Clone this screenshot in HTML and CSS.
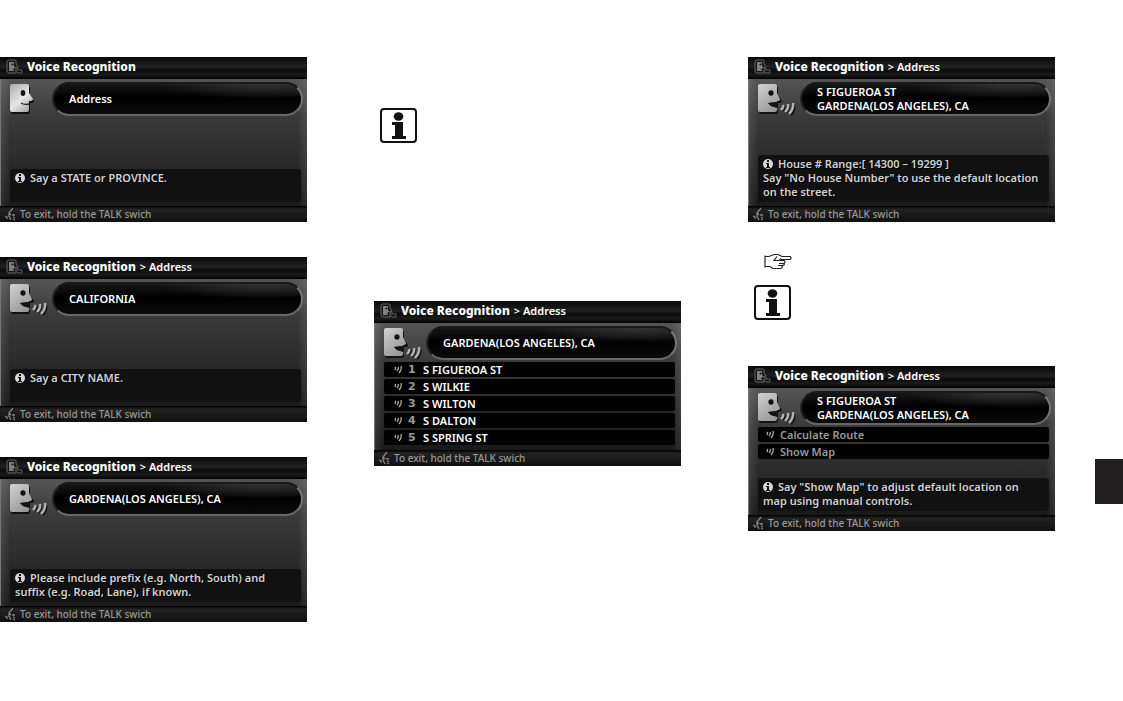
FILE: index.html
```html
<!DOCTYPE html>
<html lang="en">
<head>
<meta charset="utf-8">
<title>Voice Recognition: Address</title>
<link rel="stylesheet" href="styles.css">
</head>
<body>
<svg class="sprites" aria-hidden="true">
  <defs>
    <linearGradient id="skin" x1="0" y1="0" x2="0.6" y2="1"><stop offset="0" stop-color="#d2d2d2"/><stop offset="1" stop-color="#999"/></linearGradient>
    <linearGradient id="skin-lit" x1="0" y1="0" x2="0.7" y2="1"><stop offset="0" stop-color="#aaa"/><stop offset="0.6" stop-color="#e6e6e6"/><stop offset="1" stop-color="#aaa"/></linearGradient>
    <symbol id="face-closed" viewBox="0 0 40 34">
      <path d="M3 3H18Q20 3 20 5V12L24 18Q24 20 20 20V29Q20 31 18 31H3Q1 31 1 29V5Q1 3 3 3Z" fill="#111" transform="translate(1 1)"/>
      <path d="M3 2H18Q20 2 20 4V11L24 17Q24 19 20 19V28Q20 30 18 30H3Q1 30 1 28V4Q1 2 3 2Z" fill="url(#skin-lit)"/>
      <ellipse cx="14" cy="11" rx="2.300" ry="3" fill="#111"/><path d="M12 21Q15 23 20 22" fill="none" stroke="#222" stroke-width="1.300"/>
    </symbol>
    <symbol id="face-talk" viewBox="0 0 40 34">
      <path d="M3 3H18Q20 3 20 5V12L24 18Q24 20 20 20L13 22L20 27V29Q20 31 18 31H3Q1 31 1 29V5Q1 3 3 3Z" fill="#111" transform="translate(1 1)"/>
      <path d="M3 2H18Q20 2 20 4V11L23 17Q23 19 20 19V20L11 21L14 24L20 26V28Q20 30 18 30H3Q1 30 1 28V4Q1 2 3 2Z" fill="url(#skin)"/>
      <path d="M11 21L21 20V26L14 24Z" fill="#151515"/>
      <ellipse cx="14" cy="11" rx="2.600" ry="2.800" fill="#111"/>
      <g fill="none" stroke="#151515" stroke-width="2.600" transform="translate(1 1)"><path d="M26 23Q27 25 25 28M31 22Q31 26 28 30M36 22Q37 27 33 32"/></g>
      <g fill="none" stroke="#b4b4b4" stroke-width="2.400"><path d="M26 23Q27 25 24 28M31 22Q32 26 28 30M36 21Q37 27 32 32"/></g>
    </symbol>
    <symbol id="head" viewBox="0 0 17 16">
      <path d="M3 1H9Q10 1 10 2V5L12 8L10 9V14H3Q1 14 1 12V3Q1 1 3 1Z" fill="#151515" stroke="#666"/>
      <path d="M3 3H8V7L10 9H8V10H6L8 11V12H3Z" fill="#808080"/><circle cx="6.500" cy="5.500" r="1" fill="#111"/>
      <path d="M11 11H16V14H12L10 12M12 9V11" fill="none" stroke="#606060"/>
    </symbol>
    <symbol id="talk" viewBox="0 0 12 14">
      <path d="M9 1L5 6L7 8M5 6V9L7 13M1 9L3 10V12M8 8L11 8M9 10L11 11M9 12L11 13" fill="none" stroke="#858585" stroke-width="1.300"/>
    </symbol>
    <symbol id="info" viewBox="0 0 10 10"><circle cx="5" cy="5" r="5" fill="#d8d8d8"/><path d="M4 1H6V3H4ZM3 4H6V8H7V9H3V8H4V5H3Z" fill="#111"/></symbol>
    <symbol id="waves" viewBox="0 0 9 8"><path d="M1 1Q2 2 1 4M4 1Q5 3 3 5M7 0Q8 4 5 7" fill="none" stroke="#aaa" stroke-width="1.300"/></symbol>
    <symbol id="notice" viewBox="0 0 37 35">
      <rect x="1" y="1" width="35" height="33" rx="3" fill="#fff" stroke="#111" stroke-width="2"/>
      <ellipse cx="18.500" cy="8.500" rx="4.800" ry="4.200" fill="#111"/><path d="M12 14H23V28H26V31H12V28H15V17H12Z" fill="#111"/>
    </symbol>
  </defs>
</svg>
<div class="page">
  <main class="columns">
    <div class="column">
      <section class="screen">
        <h2 class="title"><svg class="title-icon"><use href="#head"/></svg><b>Voice Recognition</b></h2>
        <div class="body">
          <div class="heard"><svg class="face"><use href="#face-closed"/></svg><p class="pill">Address</p></div>
          <p class="hint"><svg class="info"><use href="#info"/></svg>Say a STATE or PROVINCE.</p>
        </div>
        <p class="footer"><svg class="talk"><use href="#talk"/></svg>To exit, hold the TALK swich</p>
      </section>
      <section class="screen">
        <h2 class="title"><svg class="title-icon"><use href="#head"/></svg><b>Voice Recognition</b> &gt; Address</h2>
        <div class="body">
          <div class="heard"><svg class="face"><use href="#face-talk"/></svg><p class="pill">CALIFORNIA</p></div>
          <p class="hint"><svg class="info"><use href="#info"/></svg>Say a CITY NAME.</p>
        </div>
        <p class="footer"><svg class="talk"><use href="#talk"/></svg>To exit, hold the TALK swich</p>
      </section>
      <section class="screen">
        <h2 class="title"><svg class="title-icon"><use href="#head"/></svg><b>Voice Recognition</b> &gt; Address</h2>
        <div class="body">
          <div class="heard"><svg class="face"><use href="#face-talk"/></svg><p class="pill">GARDENA(LOS ANGELES), CA</p></div>
          <p class="hint"><svg class="info"><use href="#info"/></svg>Please include prefix (e.g. North, South) and<br>suffix (e.g. Road, Lane), if known.</p>
        </div>
        <p class="footer"><svg class="talk"><use href="#talk"/></svg>To exit, hold the TALK swich</p>
      </section>
    </div>
    <div class="column middle">
      <svg class="notice" role="img" aria-label="Information"><use href="#notice"/></svg>
      <section class="screen">
        <h2 class="title"><svg class="title-icon"><use href="#head"/></svg><b>Voice Recognition</b> &gt; Address</h2>
        <div class="body">
          <div class="heard"><svg class="face"><use href="#face-talk"/></svg><p class="pill">GARDENA(LOS ANGELES), CA</p></div>
          <ol class="choices">
            <li><svg class="waves"><use href="#waves"/></svg><span class="number">1</span>S FIGUEROA ST</li>
            <li><svg class="waves"><use href="#waves"/></svg><span class="number">2</span>S WILKIE</li>
            <li><svg class="waves"><use href="#waves"/></svg><span class="number">3</span>S WILTON</li>
            <li><svg class="waves"><use href="#waves"/></svg><span class="number">4</span>S DALTON</li>
            <li><svg class="waves"><use href="#waves"/></svg><span class="number">5</span>S SPRING ST</li>
          </ol>
        </div>
        <p class="footer"><svg class="talk"><use href="#talk"/></svg>To exit, hold the TALK swich</p>
      </section>
    </div>
    <div class="column last">
      <section class="screen">
        <h2 class="title"><svg class="title-icon"><use href="#head"/></svg><b>Voice Recognition</b> &gt; Address</h2>
        <div class="body">
          <div class="heard"><svg class="face"><use href="#face-talk"/></svg><p class="pill">S FIGUEROA ST<br>GARDENA(LOS ANGELES), CA</p></div>
          <p class="hint"><svg class="info"><use href="#info"/></svg>House # Range:[ 14300 – 19299 ]<br>Say "No House Number" to use the default location<br>on the street.</p>
        </div>
        <p class="footer"><svg class="talk"><use href="#talk"/></svg>To exit, hold the TALK swich</p>
      </section>
      <div class="notes">
        <svg class="hand" viewBox="0 0 28 16" role="img" aria-label="See"><path d="M1 2V14M1 3H5L10 1H14L18 3H26Q28 5 26 6H17M13 3L10 7L15 7L17 5M16 7H20Q22 8 20 10H15M20 10Q21 12 18 12H14M18 12Q19 15 16 15H9L6 13H1" fill="none" stroke="#222" stroke-width="1.200"/></svg>
        <svg class="notice" role="img" aria-label="Information"><use href="#notice"/></svg>
      </div>
      <section class="screen">
        <h2 class="title"><svg class="title-icon"><use href="#head"/></svg><b>Voice Recognition</b> &gt; Address</h2>
        <div class="body">
          <div class="heard"><svg class="face"><use href="#face-talk"/></svg><p class="pill">S FIGUEROA ST<br>GARDENA(LOS ANGELES), CA</p></div>
          <ul class="choices dim">
            <li><svg class="waves"><use href="#waves"/></svg>Calculate Route</li>
            <li><svg class="waves"><use href="#waves"/></svg>Show Map</li>
          </ul>
          <p class="hint"><svg class="info"><use href="#info"/></svg>Say "Show Map" to adjust default location on<br>map using manual controls.</p>
        </div>
        <p class="footer"><svg class="talk"><use href="#talk"/></svg>To exit, hold the TALK swich</p>
      </section>
    </div>
  </main>
  <div class="thumb-tab"></div>
</div>
</body>
</html>
```
FILE: styles.css
```css
* { box-sizing: border-box; }
body, p, h2, ol, ul { margin: 0; padding: 0; }
body { background: #fff; font: 600 11px/14px "Noto Sans", sans-serif; color: #fff; }
svg { flex: none; }
.sprites { position: absolute; width: 0; height: 0; }

.page { display: flex; gap: 40px; }
.columns { flex: 1; display: grid; grid-template-columns: repeat(3, 1fr); gap: 67px; padding-top: 57px; }
.column { display: flex; flex-direction: column; gap: 35px; }
.middle { gap: 158px; padding-top: 51px; }
.last { gap: 0; }
.notes { display: flex; flex-direction: column; gap: 15px; padding: 31px 0 46px 6px; }
.notice { display: block; width: 37px; height: 35px; }
.middle .notice { margin-left: 6px; }
.hand { display: block; width: 28px; height: 17px; margin-left: 10px; }
.thumb-tab { width: 28px; height: 45px; margin-top: 459px; background: #231f20; }

.screen { display: flex; flex-direction: column; min-height: 165px; white-space: nowrap; background: #1c1c1c; }
.title { display: flex; align-items: center; gap: 4px; height: 22px; padding: 0 0 2px 6px; font-size: 11px; font-weight: 600; background: linear-gradient(#080808, #202020 45%, #0a0a0a 60%, #1b1b1b 80%, #000); }
.title b { font-size: 12px; font-weight: 800; }
.title-icon { width: 17px; height: 16px; }
.body { flex: 1; display: flex; flex-direction: column; gap: 2px; padding: 3px 4px 4px 8px; border-left: 1px solid #777; background: linear-gradient(90deg, #ffffff18, transparent 3%, transparent 97%, #ffffff18), linear-gradient(#555, #3a3a3a 30%, #262626 75%, #191919); }
.heard { display: flex; gap: 3px; }
.face { width: 40px; height: 34px; }
.pill { flex: 1; display: flex; align-items: center; min-height: 34px; padding-left: 15px; border: 2px solid; border-color: #191919 #777 #666 #222; border-radius: 17px; background: radial-gradient(ellipse at 85% 0, #333, transparent 35%), linear-gradient(#161616, #000 45%, #0b0b0b); text-shadow: 1px 1px #000; }
.hint { min-height: 33px; margin: auto 2px 0 1px; padding: 2px 5px 3px; border-radius: 3px; background: #111; color: #d2d2d2; text-shadow: 1px 1px #000; }
.info { width: 10px; height: 10px; margin-right: 5px; vertical-align: -1px; }
.choices { display: grid; gap: 2px; margin: 0 2px 0 1px; list-style: none; }
.choices li { display: flex; align-items: center; height: 15px; padding-left: 10px; border-radius: 2px; background: #020202; }
.waves { width: 9px; height: 8px; margin-right: 5px; }
.number { width: 15px; color: #999; font: 700 11px/14px "DejaVu Sans", sans-serif; }
.dim { color: #999; }
.dim li { padding-left: 8px; }
.footer { display: flex; align-items: center; gap: 4px; height: 16px; padding-left: 4px; background: linear-gradient(#000, #222 20%, #101010); color: #999; font-size: 10px; font-weight: 500; }
.talk { width: 12px; height: 14px; }
```
